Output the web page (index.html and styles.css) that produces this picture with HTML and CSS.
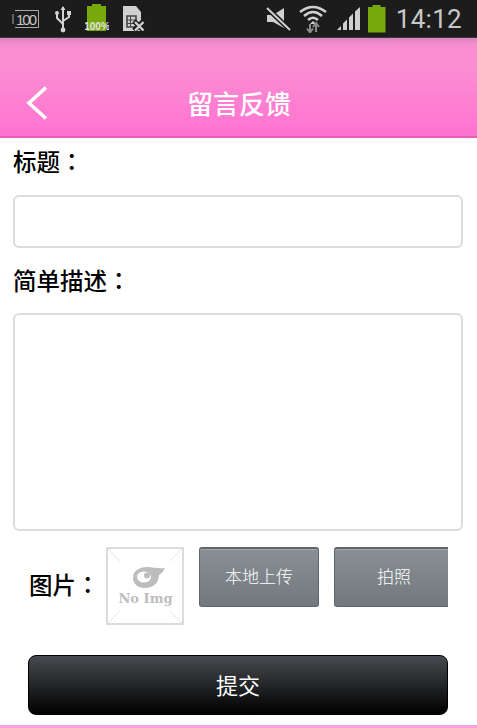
FILE: index.html
```html
<!DOCTYPE html>
<html lang="zh">
<head>
<meta charset="utf-8">
<title>留言反馈</title>
<link rel="stylesheet" href="styles.css">
</head>
<body>
<div class="status">
  <div class="status-left">
    <svg class="i-100" width="28" height="20" viewBox="0 0 28 20"><path d="M3 1.500H26.500V18.500H3M1 5V15" fill="none" stroke="#a8a8a8" stroke-width="1"/><text x="4" y="15.500" font-size="15" fill="#c4c4c4" font-family="Liberation Sans" textLength="21">100</text></svg>
    <svg class="i-usb" width="18" height="28" viewBox="0 0 18 28"><path d="M9 2V24M9 19L3 13V9M9 16L15 12V9" fill="none" stroke="#d2d2d2" stroke-width="2"/><path d="M9 1L11.500 5H6.500Z" fill="#d2d2d2"/><circle cx="9" cy="25" r="2.400" fill="#d2d2d2"/><circle cx="3" cy="8" r="2" fill="#d2d2d2"/><rect x="13" y="6" width="4" height="4" fill="#d2d2d2"/></svg>
    <svg class="i-bat" width="24" height="29" viewBox="0 0 24 29"><path d="M7 0H16V2H21V27H2V2H7Z" fill="#78a90c"/><text x="12" y="26" text-anchor="middle" font-size="10" font-weight="700" fill="#e4e4e4" font-family="Liberation Sans">100%</text></svg>
    <svg class="i-sim" width="24" height="28" viewBox="0 0 24 28"><path d="M1 1H14L19 7V26H1Z" fill="#d0d0d0"/><path d="M5 11H14V22H5Z" fill="none" stroke="#444" stroke-width="1.600"/><path d="M5 15H14M5 18.500H14M8.500 11V22" stroke="#444" stroke-width="1"/><path d="M12 16L21.500 25.500M21.500 16L12 25.500" stroke="#1c1c1c" stroke-width="5"/><path d="M13 17L21.500 25.500M21.500 17L13 25.500" stroke="#d0d0d0" stroke-width="2.400"/></svg>
  </div>
  <div class="status-right">
    <svg class="i-mute" width="26" height="24" viewBox="0 0 26 24"><path d="M1 8H7L18 1V21L7 15H1Z" fill="#cfcfcf"/><path d="M1 1L24 23" stroke="#1c1c1c" stroke-width="5"/><path d="M1 1L24 23" stroke="#cfcfcf" stroke-width="2"/></svg>
    <svg class="i-wifi" width="28" height="28" viewBox="0 0 28 28"><path d="M1 7Q14 -3 27 7M5 11Q14 3 23 11M9 15Q14 10.500 19 15" fill="none" stroke="#d0d0d0" stroke-width="2.500"/><path d="M14 16L11 19H17Z" fill="#d0d0d0"/><path d="M11 19V27M8 23.500L11 27.500L14 23.500" fill="none" stroke="#8a8a8a" stroke-width="2"/><path d="M17 27V19M14 22L17 18L20 22" fill="none" stroke="#8a8a8a" stroke-width="2"/></svg>
    <svg class="i-sig" width="26" height="24" viewBox="0 0 26 24"><path d="M1 23L5 19V23ZM7 23V16.500L11 12.500V23ZM13 23V10.500L17 6.500V23ZM19 23V4.500L24 0V23Z" fill="#d0d0d0"/></svg>
    <svg class="i-bat2" width="20" height="28" viewBox="0 0 20 28"><path d="M5.500 0H13.500V2H18.500V27.500H1V2H5.500Z" fill="#78a90c"/></svg>
    <span class="clock">14:12</span>
  </div>
</div>
<header class="topbar">
  <svg class="back" width="24" height="34" viewBox="0 0 24 34"><path d="M21 1.500L4 17L21 32.500" fill="none" stroke="#fff" stroke-width="3.600"/></svg>
  <h1 class="title">留言反馈</h1>
</header>
<main class="form">
  <div class="label">标题<span class="colon" lang="zh-TW">：</span></div>
  <div class="field field-one"></div>
  <div class="label label-two">简单描述<span class="colon" lang="zh-TW">：</span></div>
  <div class="field field-area"></div>
  <div class="photo-row">
    <span class="photo-label">图片<span class="colon" lang="zh-TW">：</span></span>
    <svg class="noimg" width="78" height="78" viewBox="0 0 78 78">
      <rect x="1" y="1" width="76" height="76" fill="#fff" stroke="#dcdcdc" stroke-width="2"/>
      <path d="M2 2L14 14M76 2L64 14M2 76L14 64M76 76L64 64" stroke="#e2e2e2"/>
      <path d="M27 31C27 24 33 20 41 20C47 20 53 22 59 21C57 25 55 27 53 28C53 36 47 41 39 41C32 41 27 37 27 31Z" fill="#bdbdbd"/>
      <ellipse cx="38" cy="30" rx="7" ry="5.500" fill="#fff"/>
      <circle cx="41" cy="28.500" r="3" fill="#bdbdbd"/>
      <text x="39.500" y="56" text-anchor="middle" font-size="13" font-weight="700" fill="#bdbdbd" font-family="DejaVu Serif">No Img</text>
    </svg>
    <div class="upload-btns">
      <button class="gray-btn local" type="button">本地上传</button>
      <button class="gray-btn shot" type="button">拍照</button>
    </div>
  </div>
  <button class="submit" type="button">提交</button>
</main>
<div class="foot"></div>
</body>
</html>
```
FILE: styles.css
```css
* { box-sizing: border-box; }
html, body { margin: 0; padding: 0; }
body {
  width: 477px;
  height: 728px;
  overflow: hidden;
  background: #fff;
  font-family: "Roboto", "Noto Sans CJK SC", sans-serif;
  display: flex;
  flex-direction: column;
}
.status {
  height: 38px;
  flex: none;
  background: #1c1c1c;
  border-bottom: 1px solid #3a3a3a;
  display: flex;
  justify-content: space-between;
  align-items: center;
  padding: 0 15px 0 12px;
}
.status svg { display: block; flex: none; }
.status-left { display: flex; align-items: center; }
.status-right { display: flex; align-items: center; }
.i-usb { margin-left: 14px; }
.i-bat { margin-left: 13px; }
.i-sim { margin-left: 13px; }
.i-wifi { margin-left: 7px; }
.i-sig { margin-left: 9px; }
.i-bat2 { margin-left: 5px; }
.clock {
  margin-left: 9px;
  font-size: 26px;
  line-height: 30px;
  color: #c8c8c8;
  letter-spacing: 0.3px;
  font-family: "Roboto", sans-serif;
}
.topbar {
  height: 100px;
  flex: none;
  background: linear-gradient(#d884bc 0, #f88ed0 8px, #fb8dd2 30px, #ff73d0 95px);
  border-bottom: 2px solid #e85cbc;
  display: flex;
  align-items: flex-end;
  position: relative;
  padding: 0 0 16px 25px;
}
.back { display: block; flex: none; }
.title {
  margin: 0 0 -1px 138px;
  font-size: 26px;
  line-height: 32px;
  font-weight: 500;
  color: #fff;
}
.form {
  flex: 1;
  padding: 0 13px;
  min-height: 0;
}
.label {
  font-size: 23.500px;
  height: 57px;
  color: #000;
  font-weight: 500;
  padding-top: 7px;
  line-height: 32px;
}
.colon {
  font-family: "Noto Sans CJK TC", sans-serif;
}
.field {
  background: #fff;
  border: 2px solid #dcdcdc;
  border-radius: 6px;
  width: 450px;
}
.field-one { height: 53px; }
.label-two { height: 65px; padding-top: 16px; }
.field-area { height: 218px; }
.photo-row {
  display: flex;
  align-items: flex-start;
  margin-top: 16px;
  padding-left: 16px;
  height: 79px;
}
.photo-label {
  width: 77px;
  font-size: 23.500px;
  line-height: 32px;
  margin-top: 21px;
  font-weight: 500;
  color: #000;
  white-space: nowrap;
}
.noimg { display: block; flex: none; }
.upload-btns {
  display: flex;
  width: 249px;
  margin-left: 15px;
  overflow: hidden;
  flex: none;
  gap: 15px;
}
.gray-btn {
  flex: none;
  height: 60px;
  width: 120px;
  margin: 0;
  padding: 0 0 4px;
  border: 1px solid #5f666b;
  border-top: 2px solid #5f666b;
  border-radius: 3px;
  background: linear-gradient(#899095, #72797e);
  box-shadow: inset 0 1px 0 #a0a6aa;
  color: #fff;
  font-size: 17px;
  font-family: inherit;
  font-weight: 300;
}
.submit {
  display: block;
  margin: 29px 0 0 15px;
  width: 420px;
  height: 60px;
  border: 1px solid #000;
  border-radius: 8px;
  background: linear-gradient(#474a4f, #000);
  color: #fff;
  font-size: 22px;
  font-family: inherit;
  padding: 0 0 2px;
}
.foot {
  height: 3px;
  flex: none;
  background: #f8a0dc;
}
```
